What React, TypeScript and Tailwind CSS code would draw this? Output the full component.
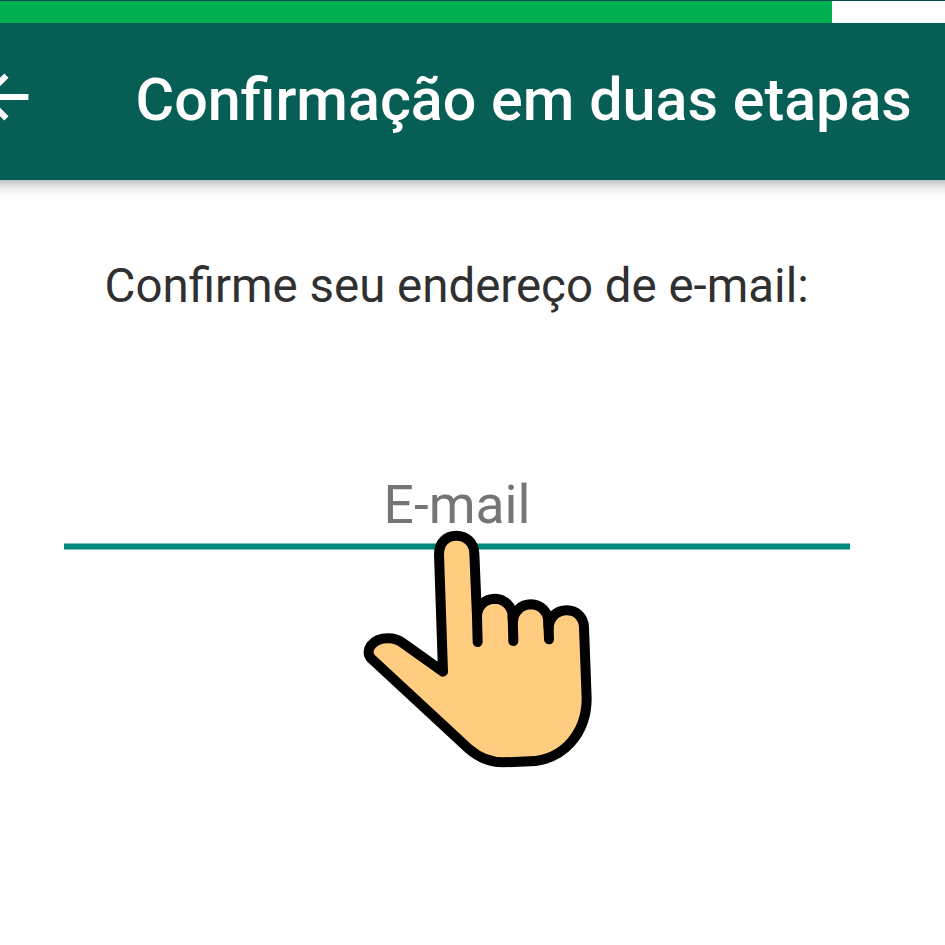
function BackArrow() {
  return (
    <svg className="h-[50px] w-[29px]" viewBox="0 0 29 50" fill="none" stroke="white" strokeWidth="6">
      <path d="M28.4 25H-14M6.4 3.6L-15 25L6.4 46.4" />
    </svg>
  );
}

function PointingHand() {
  return (
    <svg
      className="absolute left-[350px] top-[520px] h-[260px] w-[260px]"
      viewBox="0 0 780 780"
      fill="none"
      stroke="#000"
      strokeWidth="30"
      strokeLinecap="round"
      strokeLinejoin="round"
    >
      <path
        fill="#ffcc80"
        d="M279 455L267 103C267 67 290 47 319 47C348 47 372 67 373 100L381 290C381 258 405 236 435 236C464 237 488 260 488 290L489 306C489 275 514 253 543 253C572 254 595 275 595 306L596 325C596 293 620 271 650 271C680 271 701 292 702 322L710 535C710 640 640 720 540 724L460 727C420 727 388 714 358 688L64 416C42 392 66 355 115 355C133 355 146 360 160 370Z"
      />
      <path d="M381 290L383 366M488 290L490 363M595 306L597 358" />
    </svg>
  );
}

export default function App() {
  return (
    <div className="relative flex h-[945px] w-[945px] flex-col overflow-hidden bg-white font-['Roboto',sans-serif]">
      <div className="h-px shrink-0 bg-[#064a45]" />
      <div className="flex h-[22px] shrink-0 bg-white">
        <div className="w-[832px] bg-[#00b050]" />
      </div>
      <header className="flex h-[157px] shrink-0 items-start bg-[#075e54]">
        <div className="w-[135.5px] shrink-0 pt-[49px]">
          <BackArrow />
        </div>
        <h1 className="whitespace-nowrap pt-[42px] text-[59.25px] leading-[70px] font-medium text-white">
          Confirmação em duas etapas
        </h1>
      </header>
      <div className="h-[17px] shrink-0 bg-linear-to-b from-[#c2c2c2] via-[#ededed] via-50% to-white" />
      <main className="flex flex-col">
        <p className="whitespace-nowrap pl-[104.5px] pt-[61px] text-[47.45px] leading-[56px] text-[#303030]">
          Confirme seu endereço de e-mail:
        </p>
        <div className="ml-[64px] mt-[159px] flex h-[77px] w-[786px] flex-col justify-between">
          <div className="text-center text-[53.4px] leading-[64px] text-[#757575]">E-mail</div>
          <div className="h-[7px] border-y border-[#00897b]/50 bg-[#00897b] bg-clip-padding" />
        </div>
      </main>
      <PointingHand />
    </div>
  );
}
